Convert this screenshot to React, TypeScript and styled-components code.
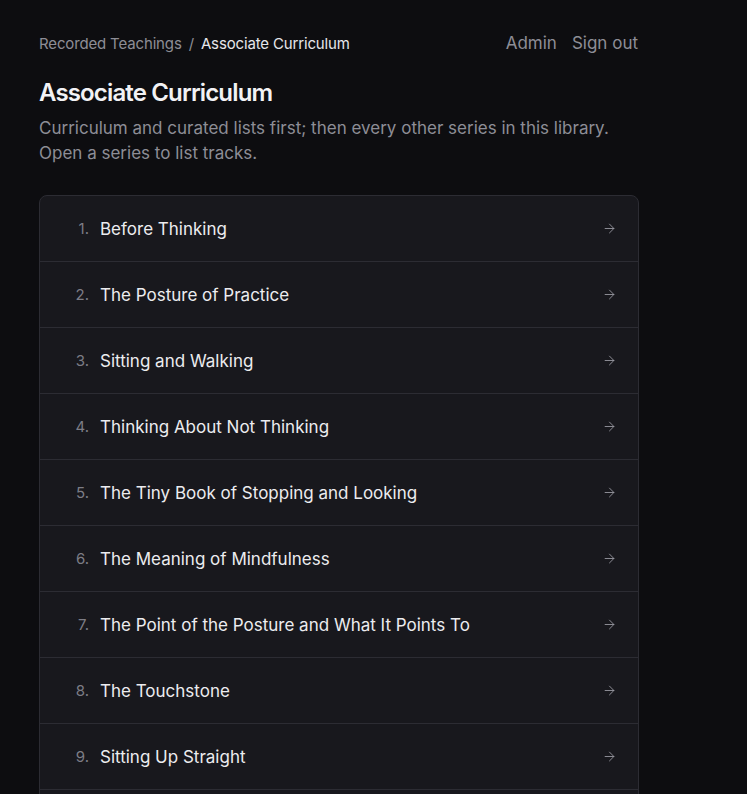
import React from "react";
import styled, { createGlobalStyle } from "styled-components";
import { ArrowRight } from "lucide-react";

const GlobalStyle = createGlobalStyle`
  html, body {
    margin: 0;
    padding: 0;
    background: #0d0d10;
  }
  body {
    font-family: Inter, "Noto Sans", sans-serif;
    color: #ececef;
    -webkit-font-smoothing: antialiased;
  }
`;

const Page = styled.div`
  padding: 32px 39px 40px;
  max-width: 600px;
`;

const TopBar = styled.div`
  display: flex;
  justify-content: space-between;
  align-items: center;
  height: 22px;
`;

const Crumbs = styled.nav`
  display: flex;
  align-items: center;
  gap: 7px;
  font-size: 15px;
  letter-spacing: -0.15px;
`;

const Crumb = styled.span<{ current?: boolean }>`
  color: ${(p) => (p.current ? "#e6e6ea" : "#8d8d96")};
`;

const Sep = styled.span`
  color: #8d8d96;
`;

const NavLinks = styled.div`
  display: flex;
  gap: 15px;
  font-size: 17px;
  color: #8d8d96;
  margin-right: 1px;
`;

const Title = styled.h1`
  margin: 24px 0 0;
  font-size: 24px;
  font-weight: 600;
  letter-spacing: -0.85px;
  line-height: 30px;
  color: #f2f2f5;
`;

const Lead = styled.p`
  margin: 8px 0 0;
  font-size: 17px;
  line-height: 25px;
  color: #8d8d96;
`;

const List = styled.ol`
  list-style: none;
  margin: 29px 0 0;
  padding: 0;
  background: #18181d;
  border: 1px solid #2c2c33;
  border-radius: 8px;
  overflow: hidden;
`;

const Row = styled.li`
  display: flex;
  align-items: center;
  height: 65px;
  padding: 0 21px 0 20px;
  border-top: 1px solid #2c2c33;
  &:first-child {
    border-top: none;
  }
`;

const Num = styled.span`
  width: 29px;
  text-align: right;
  font-size: 15px;
  color: #7d7d86;
  flex-shrink: 0;
`;

const Name = styled.span`
  margin-left: 11px;
  flex: 1;
  font-size: 17px;
  color: #ececef;
`;

const Arrow = styled(ArrowRight)`
  color: #9a9aa3;
  flex-shrink: 0;
`;

const series = [
  "Before Thinking",
  "The Posture of Practice",
  "Sitting and Walking",
  "Thinking About Not Thinking",
  "The Tiny Book of Stopping and Looking",
  "The Meaning of Mindfulness",
  "The Point of the Posture and What It Points To",
  "The Touchstone",
  "Sitting Up Straight",
  "Just This",
];

function App() {
  return (
    <Page>
      <GlobalStyle />
      <TopBar>
        <Crumbs>
          <Crumb>Recorded Teachings</Crumb>
          <Sep>/</Sep>
          <Crumb current>Associate Curriculum</Crumb>
        </Crumbs>
        <NavLinks>
          <span>Admin</span>
          <span>Sign out</span>
        </NavLinks>
      </TopBar>
      <Title>Associate Curriculum</Title>
      <Lead>
        Curriculum and curated lists first; then every other series in this
        library. Open a series to list tracks.
      </Lead>
      <List>
        {series.map((name, i) => (
          <Row key={name}>
            <Num>{i + 1}.</Num>
            <Name>{name}</Name>
            <Arrow size={15} strokeWidth={1.4} />
          </Row>
        ))}
      </List>
    </Page>
  );
}

export default App;
